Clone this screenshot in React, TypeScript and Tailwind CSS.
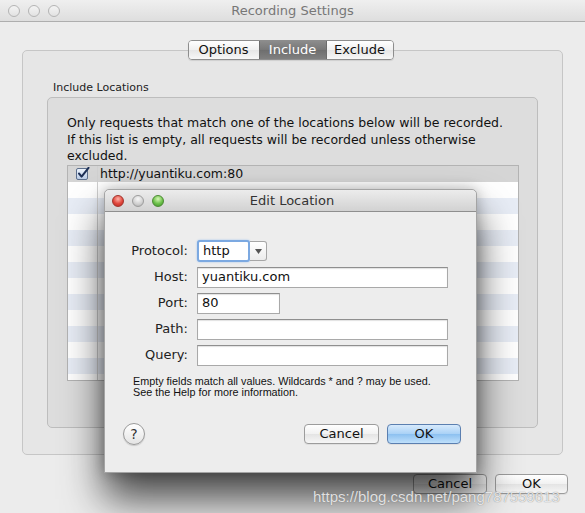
import React from 'react'

const font = "font-['DejaVu_Sans',_'Liberation_Sans',_sans-serif]"

function Light({ color }: { color: 'red' | 'gray' | 'green' | 'off' }) {
  const cls =
    color === 'red'
      ? 'bg-[radial-gradient(circle_at_50%_30%,#ffb3a8,#e0463c_55%,#b52a22)] border-[#a3332b]'
      : color === 'green'
        ? 'bg-[radial-gradient(circle_at_50%_30%,#d6f7b5,#6cc14a_55%,#3f8f2a)] border-[#4c8a33]'
        : color === 'gray'
          ? 'bg-[radial-gradient(circle_at_50%_30%,#f8f8f8,#cfcfcf_60%,#a9a9a9)] border-[#9d9d9d]'
          : 'bg-[linear-gradient(#f4f4f4,#e2e2e2)] border-[#b4b4b4]'
  return <span className={`block h-[12px] w-[12px] rounded-full border ${cls}`} />
}

function Checkbox() {
  return (
    <svg width="14" height="14" viewBox="0 0 14 14" aria-hidden="true">
      <defs>
        <linearGradient id="cb" x1="0" y1="0" x2="0" y2="1">
          <stop offset="0" stopColor="#eef4fc" />
          <stop offset="1" stopColor="#b9cbe6" />
        </linearGradient>
      </defs>
      <rect x="0.5" y="1.5" width="11" height="11" rx="1.5" fill="url(#cb)" stroke="#5d6f8c" />
      <path d="M3 6.5 L5.6 9.6 L12.5 0.8" fill="none" stroke="#1d2f56" strokeWidth="2" strokeLinecap="round" strokeLinejoin="round" />
    </svg>
  )
}

function Field({ label, width, value }: { label: string; width: string; value?: string }) {
  return (
    <div className="flex items-center h-[22px]">
      <span className="w-[86px] text-right pr-[3px] text-[13px] text-[#222]">{label}</span>
      <div
        className={`ml-[6px] h-[21px] ${width} border border-[#a9a9a9] border-t-[#8f8f8f] bg-white flex items-center pl-[4px] text-[13px] text-[#111] shadow-[inset_0_1px_1px_rgba(0,0,0,0.12)]`}
      >
        {value}
      </div>
    </div>
  )
}

function Button({ children, primary, className = '' }: { children: React.ReactNode; primary?: boolean; className?: string }) {
  return (
    <div
      className={`flex items-center justify-center h-[20px] rounded-[4px] border text-[13px] text-[#111] ${
        primary
          ? 'border-[#5b7fb0] bg-[linear-gradient(#d7eafc,#a9d1f6_50%,#8cc0f0_51%,#bfe0fb)]'
          : 'border-[#9c9c9c] bg-[linear-gradient(#ffffff,#f1f1f1_50%,#e4e4e4_51%,#f6f6f6)]'
      } shadow-[0_1px_0_rgba(0,0,0,0.06)] ${className}`}
    >
      {children}
    </div>
  )
}

export default function App() {
  const rows = Array.from({ length: 14 }, (_, i) => i)

  return (
    <div className={`relative w-[585px] h-[513px] overflow-hidden bg-[#ececec] ${font}`}>
      {/* window title bar */}
      <div className="flex items-center h-[22px] border-b border-[#aeaeae] bg-[linear-gradient(#efefef,#dedede)]">
        <div className="flex gap-[8px] pl-[8px]">
          <Light color="off" />
          <Light color="off" />
          <Light color="off" />
        </div>
        <div className="flex-1 text-center pr-[60px] text-[13px] text-[#777]">Recording Settings</div>
      </div>

      {/* tabs */}
      <div className="relative z-10 flex justify-center mt-[18px] pr-[4px]">
        <div className="flex h-[20px] rounded-[4px] border border-[#8d8d8d] overflow-hidden text-[13px] shadow-[0_1px_1px_rgba(0,0,0,0.1)]">
          <div className="w-[70px] flex items-center justify-center bg-[linear-gradient(#ffffff,#f0f0f0_50%,#e6e6e6_51%,#f7f7f7)] text-[#111]">
            Options
          </div>
          <div className="w-[68px] flex items-center justify-center border-x border-[#6c6c6c] bg-[linear-gradient(#8c8c8c,#777_50%,#6e6e6e_51%,#808080)] text-white">
            Include
          </div>
          <div className="w-[66px] flex items-center justify-center bg-[linear-gradient(#ffffff,#f0f0f0_50%,#e6e6e6_51%,#f7f7f7)] text-[#111]">
            Exclude
          </div>
        </div>
      </div>

      {/* tab body */}
      <div className="mx-[22px] mt-[-10px] h-[405px] rounded-[5px] border border-[#c6c6c6] bg-[#e6e6e6] px-[24px] pt-[29px]">
        <div className="ml-[6px] h-[16px] text-[11px] leading-[16px] text-[#222]">Include Locations</div>
        <div className="mt-[1px] h-[331px] rounded-[5px] border border-[#bdbdbd] bg-[#dddddd] pl-[19px] pr-[18px] pt-[17px]">
          <div className="text-[12.5px] leading-[16.5px] text-[#111] whitespace-nowrap">
            <div>Only requests that match one of the locations below will be recorded.</div>
            <div>If this list is empty, all requests will be recorded unless otherwise</div>
            <div>excluded.</div>
          </div>
          <div className="h-[216px] border border-[#b3b3b3] overflow-hidden bg-white">
            {rows.map((i) => (
              <div
                key={i}
                className={`flex h-[16px] ${i === 0 ? 'bg-[#d5d5d5]' : i % 2 === 0 ? 'bg-[#e8edf6]' : 'bg-white'}`}
              >
                <div className="w-[30px] shrink-0 border-r border-[#d0d0d0] flex items-center justify-center">
                  {i === 0 && <Checkbox />}
                </div>
                {i === 0 && (
                  <div className="pl-[2px] text-[12.5px] leading-[16px] text-[#111]">http://yuantiku.com:80</div>
                )}
              </div>
            ))}
          </div>
        </div>
      </div>

      {/* window buttons */}
      <div className="flex justify-end gap-[8px] mt-[19px] pr-[17px]">
        <Button className="w-[74px]">Cancel</Button>
        <Button className="w-[73px]">OK</Button>
      </div>

      {/* Edit Location sheet */}
      <div className="absolute left-[104px] top-[189px] w-[373px] h-[284px] rounded-t-[5px] bg-[#ededed] border border-[#a4a4a4] shadow-[0_26px_40px_rgba(0,0,0,0.7),0_0_14px_rgba(0,0,0,0.25)]">
        <div className="flex items-center h-[22px] rounded-t-[5px] border-b border-[#8f8f8f] bg-[linear-gradient(#ececec,#d2d2d2)]">
          <div className="flex gap-[8px] pl-[7px]">
            <Light color="red" />
            <Light color="gray" />
            <Light color="green" />
          </div>
          <div className="flex-1 text-center pr-[56px] text-[13px] text-[#333]">Edit Location</div>
        </div>

        <div className="pt-[28px] flex flex-col gap-[4px]">
          <div className="flex items-center h-[22px]">
            <span className="w-[86px] text-right pr-[3px] text-[13px] text-[#222]">Protocol:</span>
            <div className="ml-[6px] flex h-[22px]">
              <div className="w-[53px] h-[22px] rounded-[3px] border-[2px] border-[#7ca9e1] bg-white flex items-center pl-[4px] text-[13px] text-[#111] shadow-[0_0_2px_#9ec3ef]">
                http
              </div>
              <div className="w-[17px] h-[20px] mt-[1px] rounded-r-[3px] border border-l-0 border-[#a6a6a6] bg-[linear-gradient(#ffffff,#ececec)] flex items-center justify-center">
                <svg width="7" height="5" viewBox="0 0 7 5">
                  <path d="M0 0 H7 L3.5 5 Z" fill="#555" />
                </svg>
              </div>
            </div>
          </div>
          <Field label="Host:" width="w-[251px]" value="yuantiku.com" />
          <Field label="Port:" width="w-[83px]" value="80" />
          <Field label="Path:" width="w-[251px]" />
          <Field label="Query:" width="w-[251px]" />
        </div>

        <div className="ml-[28px] mt-[10px] text-[10.8px] leading-[11px] text-[#111] font-['Liberation_Sans',sans-serif]">
          <div>Empty fields match all values. Wildcards * and ? may be used.</div>
          <div>See the Help for more information.</div>
        </div>

        <div className="flex items-center mt-[25px] pl-[18px] pr-[15px]">
          <div className="flex h-[22px] w-[22px] items-center justify-center rounded-full border border-[#9a9a9a] bg-[linear-gradient(#ffffff,#e4e4e4)] text-[14px] text-[#333] shadow-[0_1px_1px_rgba(0,0,0,0.15)]">
            ?
          </div>
          <div className="flex-1" />
          <Button className="w-[75px]">Cancel</Button>
          <Button primary className="ml-[8px] w-[74px]">OK</Button>
        </div>
      </div>

      {/* watermark */}
      <div className="absolute left-[313px] top-[486px] text-[15px] font-['Liberation_Sans',sans-serif] text-white/80 [text-shadow:0_0_1px_rgba(90,90,90,0.9)]">
        https://blog.csdn.net/pang787559613
      </div>
    </div>
  )
}
